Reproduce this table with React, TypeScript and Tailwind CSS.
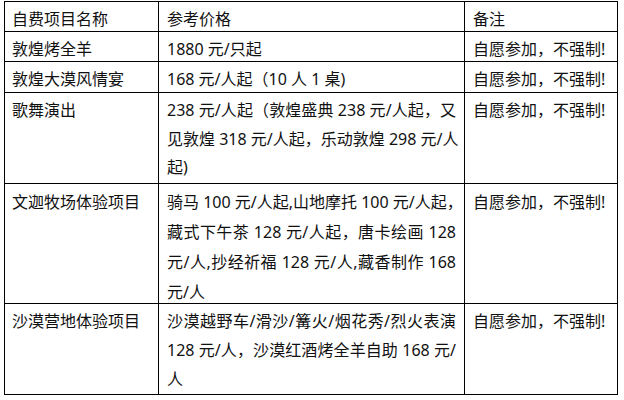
const rows: { h: string; lh: string; cells: string[][] }[] = [
  { h: 'h-[30px]', lh: 'leading-[29px]', cells: [['自费项目名称'], ['参考价格'], ['备注']] },
  { h: 'h-[30px]', lh: 'leading-[29px]', cells: [['敦煌烤全羊'], ['1880 元/只起'], ['自愿参加，不强制!']] },
  { h: 'h-[31px]', lh: 'leading-[29px]', cells: [['敦煌大漠风情宴'], ['168 元/人起（10 人 1 桌)'], ['自愿参加，不强制!']] },
  {
    h: 'h-[91px]',
    lh: 'leading-[28.5px]',
    cells: [
      ['歌舞演出'],
      ['238 元/人起（敦煌盛典 238 元/人起，又', '见敦煌 318 元/人起，乐动敦煌 298 元/人', '起)'],
      ['自愿参加，不强制!'],
    ],
  },
  {
    h: 'h-[120px]',
    lh: 'leading-[30px]',
    cells: [
      ['文迦牧场体验项目'],
      ['骑马 100 元/人起,山地摩托 100 元/人起，', '藏式下午茶 128 元/人起，唐卡绘画 128', '元/人,抄经祈福 128 元/人,藏香制作 168', '元/人'],
      ['自愿参加，不强制!'],
    ],
  },
  {
    h: 'h-[91px]',
    lh: 'leading-[29px]',
    cells: [
      ['沙漠营地体验项目'],
      ['沙漠越野车/滑沙/篝火/烟花秀/烈火表演', '128 元/人，沙漠红酒烤全羊自助 168 元/', '人'],
      ['自愿参加，不强制!'],
    ],
  },
];

const widths = ['w-[154px] pl-[7px]', 'w-[306px] pl-[8px] pr-[8px]', 'w-[153px] pl-[8px]'];

export default function App() {
  return (
    <div className="h-[400px] w-[624px] bg-white pl-[4px] pt-[1px] font-['Noto_Sans','Noto_Sans_CJK_SC',sans-serif] text-[16px] text-[#111]">
      <div className="w-[614px] border-l border-t border-black">
        {rows.map((row, i) => (
          <div key={i} className={`flex box-border border-b border-black ${row.h}`}>
            {row.cells.map((lines, j) => (
              <div key={j} className={`box-border shrink-0 border-r border-black pt-[3px] ${widths[j]} ${row.lh}`}>
                {lines.map((line, k) => (
                  <div
                    key={k}
                    className={
                      k < lines.length - 1
                        ? 'whitespace-nowrap text-justify [text-align-last:justify]'
                        : 'whitespace-nowrap'
                    }
                  >
                    {line}
                  </div>
                ))}
              </div>
            ))}
          </div>
        ))}
      </div>
    </div>
  );
}
